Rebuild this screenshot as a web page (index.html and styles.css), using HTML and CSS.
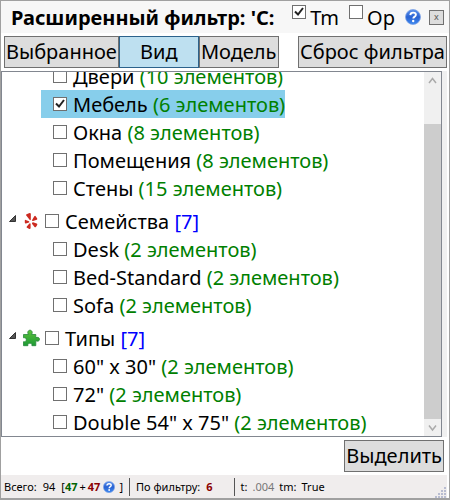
FILE: index.html
```html
<!DOCTYPE html>
<html lang="ru">
<head>
    <meta charset="UTF-8">
    <meta name="viewport" content="width=device-width, initial-scale=1.0">
    <title>Расширенный фильтр</title>
    <link rel="stylesheet" href="styles.css">
</head>
<body>
    <svg class="defs" aria-hidden="true">
        <defs>
            <linearGradient id="blue" x1="0" y1="0" x2="0" y2="1">
                <stop offset="0" stop-color="#5c93ee"/>
                <stop offset="0.5" stop-color="#2a62d2"/>
                <stop offset="1" stop-color="#3f8af0"/>
            </linearGradient>
            <linearGradient id="green" x1="0" y1="0" x2="0" y2="1">
                <stop offset="0" stop-color="#5cc23a"/>
                <stop offset="1" stop-color="#1d9a35"/>
            </linearGradient>
            <symbol id="help" viewBox="0 0 16 16">
                <circle cx="8" cy="8" r="7.5" fill="url(#blue)" stroke="#7da3e6" stroke-width="0.8"/>
                <path d="M5.3 6.1C5.4 4.4 6.5 3.6 8.1 3.6c1.7 0 2.8.9 2.8 2.2 0 1.1-.7 1.6-1.5 2.1-.8.5-1.1.8-1.1 1.7" fill="none" stroke="#fff" stroke-width="1.9"/>
                <circle cx="8.2" cy="12" r="1.2" fill="#fff"/>
            </symbol>
        </defs>
    </svg>
    <div class="window">
        <header class="header">
            <h1 class="title">Расширенный фильтр: 'C:</h1>
            <label class="option"><input type="checkbox" class="check" checked><span>Tm</span></label>
            <label class="option"><input type="checkbox" class="check"><span>Op</span></label>
            <button class="help" aria-label="Справка"><svg width="16" height="16"><use href="#help"/></svg></button>
            <button class="close" aria-label="Закрыть">x</button>
        </header>

        <div class="toolbar">
            <button class="btn">Выбранное</button>
            <button class="btn btn-view active">Вид</button>
            <button class="btn">Модель</button>
            <button class="btn btn-reset">Сброс фильтра</button>
        </div>

        <main class="main">
            <div class="list">
                <div class="tree">
                    <label class="row"><input type="checkbox" class="check"><span>Двери <span class="count">(10 элементов)</span></span></label>
                    <label class="row selected"><input type="checkbox" class="check" checked><span>Мебель <span class="count">(6 элементов)</span></span></label>
                    <label class="row"><input type="checkbox" class="check"><span>Окна <span class="count">(8 элементов)</span></span></label>
                    <label class="row"><input type="checkbox" class="check"><span>Помещения <span class="count">(8 элементов)</span></span></label>
                    <label class="row"><input type="checkbox" class="check"><span>Стены <span class="count">(15 элементов)</span></span></label>

                    <div class="group">
                        <svg class="arrow" width="7" height="7" viewBox="0 0 7 7"><path d="M6.5 0.5v6h-6z" fill="#555" stroke="#333"/></svg>
                        <svg class="icon" width="18" height="18" viewBox="0 0 18 18">
                            <g fill="#cc2a20">
                                <path d="M4.5 2.2 7.6 1q1.200-.1 1.200 1v5.400q-.2 1.300-1.200.4L4.300 3.400q-.4-.8.2-1.200z"/>
                                <path d="M3.700 7.900 7 9.200q.8.700 0 1.200l-3.100 1q-1.100.1-1.100-.9V8.600q.1-1 .9-.7z"/>
                                <path d="M8.600 12v4q-.2 1.200-1.200.9L5 15.800q-.8-.6-.2-1.400l2.600-3q1.100-.6 1.200.6z"/>
                                <path d="m11 10.300 3.700 1.200q1 .5.500 1.400l-1.300 2q-.7.700-1.400 0L10 11.800q-.3-1.500 1-1.500z"/>
                                <path d="m10.100 7.900 2.200-3.600q.7-.8 1.400-.1l1.500 2.200q.4 1-.4 1.300L11 8.900q-1.300.1-.9-1z"/>
                            </g>
                        </svg>
                        <label class="group-name"><input type="checkbox" class="check"><span>Семейства <span class="total">[7]</span></span></label>
                    </div>
                    <label class="row"><input type="checkbox" class="check"><span>Desk <span class="count">(2 элементов)</span></span></label>
                    <label class="row"><input type="checkbox" class="check"><span>Bed-Standard <span class="count">(2 элементов)</span></span></label>
                    <label class="row"><input type="checkbox" class="check"><span>Sofa <span class="count">(2 элементов)</span></span></label>

                    <div class="group">
                        <svg class="arrow" width="7" height="7" viewBox="0 0 7 7"><path d="M6.5 0.5v6h-6z" fill="#555" stroke="#333"/></svg>
                        <svg class="icon" width="18" height="18" viewBox="0 0 18 18">
                            <path d="M1.500 5.500h5C5 3.500 6 1.200 8 1.200s3 2.300 1.500 4.300h4.300v3.300c1.800-1 3.700-.3 3.700 1.500s-1.900 2.400-3.700 1.400v5H9.900c.4-1.700-.5-2.500-2-2.500s-2.400.8-2 2.500H1.500v-4c1.800.3 2.800-.6 2.800-2s-1-2.200-2.800-1.900z" fill="url(#green)" stroke="#26863a" stroke-width="0.8"/>
                        </svg>
                        <label class="group-name"><input type="checkbox" class="check"><span>Типы <span class="total">[7]</span></span></label>
                    </div>
                    <label class="row"><input type="checkbox" class="check"><span>60" x 30" <span class="count">(2 элементов)</span></span></label>
                    <label class="row"><input type="checkbox" class="check"><span>72" <span class="count">(2 элементов)</span></span></label>
                    <label class="row"><input type="checkbox" class="check"><span>Double 54" x 75" <span class="count">(2 элементов)</span></span></label>
                </div>
                <div class="scrollbar">
                    <svg class="scroll-end" viewBox="0 0 17 17"><path d="m5 11 3.500-4.500L12 11" fill="none" stroke="#aaa" stroke-width="1.500"/></svg>
                    <div class="thumb"></div>
                    <svg class="scroll-end" viewBox="0 0 17 17"><path d="m5 6.500 3.500 4.500L12 6.500" fill="none" stroke="#aaa" stroke-width="1.500"/></svg>
                </div>
            </div>
        </main>

        <div class="actions">
            <button class="btn">Выделить</button>
        </div>

        <footer class="status">
            <span>Всего:</span>
            <span class="sum">94</span>
            <span>[</span><b class="plus">47</b><span class="sign">+</span><b class="minus">47</b>
            <svg class="status-help" width="12" height="12"><use href="#help"/></svg>
            <span>]</span>
            <span class="separator"></span>
            <span>По фильтру:</span>
            <b class="minus filtered">6</b>
            <span class="separator"></span>
            <span>t:</span>
            <span class="time">.004</span>
            <span class="tm">tm:</span>
            <span class="tm">True</span>
            <svg class="grip" width="12" height="12" viewBox="0 0 12 12">
                <path d="M9 1h2v2H9zM9 4h2v2H9zM6 4h2v2H6zM9 7h2v2H9zM6 7h2v2H6zM3 7h2v2H3zM9 10h2v2H9zM6 10h2v2H6zM3 10h2v2H3zM0 10h2v2H0z" fill="#b8bcd0"/>
            </svg>
        </footer>
    </div>
</body>
</html>
```
FILE: styles.css
```css
*{
    box-sizing: border-box;
}
body{
    margin: 0;
    background-color: #fff;
    color: #000;
    font-family: "Noto Sans", "Open Sans", sans-serif;
    font-size: 20px;
    line-height: 28px;
}
.defs{
    position: absolute;
    width: 0;
    height: 0;
}
.window{
    display: flex;
    flex-direction: column;
    height: 100vh;
    border: 1px solid #a0a0a0;
    border-bottom-width: 2px;
}
button{
    padding: 0;
    font: inherit;
    color: inherit;
}
.check{
    appearance: none;
    flex: none;
    width: 14px;
    height: 14px;
    margin: 0;
    border: 1px solid #707070;
    background-color: #fff;
}
.check:checked{
    background-image: url("data:image/svg+xml,%3Csvg xmlns='http://www.w3.org/2000/svg' viewBox='0 0 12 12'%3E%3Cpath d='M2 5.500l3 3 5-6.500' fill='none' stroke='%23212121' stroke-width='2'/%3E%3C/svg%3E");
}
.header{
    display: flex;
    align-items: center;
    height: 32px;
    padding: 0 5px 0 10px;
    background-color: #f7f7f7;
    white-space: nowrap;
}
.title{
    flex: 1;
    margin: 0;
    padding-top: 2px;
    font-size: 20px;
    font-weight: bold;
}
.option{
    display: flex;
    gap: 4px;
    margin-right: 10px;
}
.option .check{
    margin-top: 3px;
}
.option span{
    padding-top: 2px;
}
.help{
    display: flex;
    border: none;
    background: none;
}
.close{
    width: 15px;
    height: 15px;
    margin-left: 8px;
    border: 1px solid #707070;
    background-color: #ddd;
    color: #555;
    font-size: 9px;
    line-height: 12px;
}
.toolbar{
    display: flex;
    padding: 3px 2px 3px 3px;
}
.btn{
    height: 32px;
    padding: 0 1px;
    border: 1px solid #707070;
    background-color: #ddd;
    white-space: nowrap;
}
.btn-view{
    width: 80px;
}
.btn.active{
    border-color: #2c628b;
    background-color: #bee0f0;
}
.btn-reset{
    margin-left: auto;
}
.main{
    display: flex;
    flex: 1;
    min-height: 0;
    margin-right: 2px;
    padding-right: 5px;
    background-color: #f0f0f0;
}
.list{
    display: flex;
    flex: 1;
    border: 1px solid #828790;
    background-color: #fff;
}
/* scrolled to the bottom */
.tree{
    display: flex;
    flex: 1;
    flex-direction: column;
    justify-content: flex-end;
    align-items: flex-start;
    overflow: hidden;
    white-space: nowrap;
}
.row{
    display: flex;
    flex: none;
    align-items: center;
    gap: 6px;
    height: 28px;
    margin-left: 39px;
    padding-left: 12px;
}
.row > span,
.group-name > span{
    padding-top: 2px;
}
.selected{
    background-color: #87ceeb;
}
.count{
    color: #008000;
}
.total{
    color: #00f;
}
.group{
    display: flex;
    flex: none;
    align-items: center;
    height: 28px;
    margin-top: 5px;
    padding-left: 7px;
}
.arrow{
    margin-bottom: 6px;
}
.icon{
    margin: 0 5px 0 6px;
}
.group-name{
    display: flex;
    align-items: center;
    gap: 6px;
}
.scrollbar{
    display: flex;
    flex-direction: column;
    width: 17px;
    background-color: #f0f0f0;
}
.scroll-end{
    flex: none;
    height: 17px;
}
.thumb{
    flex: 1;
    margin-top: 35px;
    background-color: #cdcdcd;
}
.actions{
    display: flex;
    justify-content: flex-end;
    padding: 3px 5px;
}
.status{
    display: flex;
    align-items: center;
    height: 23px;
    margin-right: 2px;
    padding-left: 3px;
    background-color: #f0eded;
    font-size: 11px;
    line-height: 22px;
}
.sum{
    margin: 0 6px;
}
.sign{
    margin: 0 2px;
}
.plus{
    color: #006400;
}
.minus{
    color: #8b0000;
}
.status-help{
    margin: 0 4px 0 3px;
}
.separator{
    width: 1px;
    height: 18px;
    margin: 0 6px;
    background-color: #555;
}
.filtered{
    margin: 0 15px 0 6px;
}
.time{
    margin-left: 5px;
    color: #777;
}
.tm{
    margin-left: 5px;
}
.grip{
    align-self: flex-end;
    margin-left: auto;
}
```
